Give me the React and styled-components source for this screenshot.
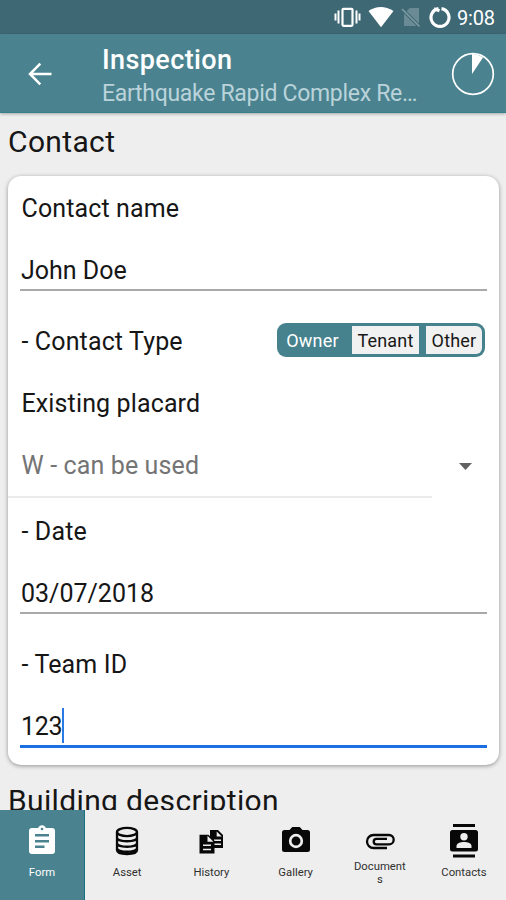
import React from "react";
import styled, { createGlobalStyle } from "styled-components";

const GlobalStyle = createGlobalStyle`
  * { box-sizing: border-box; }
  body { margin: 0; background: #eeeeee; font-family: Roboto, "Liberation Sans", sans-serif; color: #161616; }
`;

const Screen = styled.div`
  width: 506px;
  height: 900px;
  overflow: hidden;
  display: flex;
  flex-direction: column;
  background: #eeeeee;
`;

const StatusBar = styled.div`
  flex: none;
  height: 34px;
  padding-right: 10px;
  display: flex;
  align-items: center;
  justify-content: flex-end;
  background: #3d6874;
  color: #fff;
`;

const StatusIcons = styled.svg`
  display: block;
  margin-right: 5px;
`;

const Clock = styled.span`
  font-size: 20px;
  line-height: 36px;
  width: 39px;
  padding-top: 2px;
  white-space: nowrap;
  letter-spacing: -0.15px;
`;

const AppBar = styled.header`
  flex: none;
  height: 79px;
  display: flex;
  align-items: center;
  padding: 1px 11px 0 28px;
  background: #4a838f;
  border-bottom: 1px solid #34808c;
  box-shadow: 0 1px 3px rgba(0, 0, 0, 0.3);
  z-index: 1;
`;

const BackIcon = styled.svg`
  flex: none;
  width: 24px;
  height: 24px;
  margin-right: 50px;
`;

const Titles = styled.div`
  flex: 1;
  padding-top: 6px;
`;

const Title = styled.h1`
  margin: 0;
  font-size: 27px;
  line-height: 34px;
  font-weight: 500;
  color: #fff;
  letter-spacing: 0.4px;
`;

const Subtitle = styled.div`
  font-size: 23px;
  line-height: 33px;
  color: #bad3db;
  white-space: nowrap;
  letter-spacing: -0.3px;
`;

const Progress = styled.svg`
  flex: none;
  width: 44px;
  height: 44px;
`;

const Content = styled.main`
  height: 697px;
  flex: none;
  overflow: hidden;
  padding: 0 7px 0 8px;
`;

const SectionTitle = styled.h2`
  margin: 0;
  font-size: 30px;
  font-weight: 400;
  line-height: 34px;
  letter-spacing: 0.35px;
  padding-top: ${(p) => p.$top};
  white-space: nowrap;
`;

const Card = styled.section`
  height: 589px;
  margin-top: 17px;
  padding-top: 18px;
  background: #fff;
  border-radius: 13px;
  box-shadow: 0 1px 4px rgba(0, 0, 0, 0.38);
`;

const Label = styled.div`
  margin-left: 13.5px;
  font-size: 25px;
  line-height: 30px;
  white-space: nowrap;
  letter-spacing: 0.13px;
`;

const Input = styled.div`
  height: ${(p) => (p.$active ? "36px" : "35px")};
  margin: 32px 12px ${(p) => p.$gap || "0"};
  padding-left: 1px;
  display: flex;
  align-items: flex-start;
  font-size: 25px;
  line-height: 30px;
  letter-spacing: ${(p) => (p.$active ? "-0.35px" : "0")};
  border-bottom: ${(p) => (p.$active ? "3px solid #1b6fe0" : "2px solid #a9a9a9")};
`;

const Caret = styled.span`
  width: 2px;
  height: 35px;
  margin-top: -4px;
  background: #2a7ae6;
`;

const ChoiceRow = styled.div`
  height: 34px;
  display: flex;
  align-items: center;
  justify-content: space-between;
  padding-right: 14px;
  margin-bottom: 30px;
`;

const Segmented = styled.div`
  width: 208px;
  height: 34px;
  margin-bottom: 4px;
  padding: 3px;
  display: flex;
  gap: 7px;
  background: #45828d;
  border-radius: 9px;
`;

const Segment = styled.button`
  border: 0;
  padding: 2px 0 0;
  font: 400 18px/24px Roboto, sans-serif;
  letter-spacing: 0.2px;
  width: ${(p) => p.$width};
  border-radius: ${(p) => (p.$last ? "0 6px 6px 0" : "0")};
  background: ${(p) => (p.$selected ? "transparent" : "#f1f1f1")};
  color: ${(p) => (p.$selected ? "#fff" : "#181818")};
`;

const Select = styled.div`
  height: 61px;
  margin-top: 16px;
  padding: 16px 27px 0 0;
  display: flex;
  justify-content: space-between;
  align-items: flex-start;
  color: #747474;
`;

const DownArrow = styled.svg`
  width: 13px;
  height: 7px;
  margin-top: 12px;
`;

const Divider = styled.div`
  width: 424px;
  height: 2px;
  background: #ebebeb;
  margin-bottom: 19px;
`;

const TabBar = styled.nav`
  flex: none;
  height: 90px;
  display: grid;
  grid-template-columns: 85px repeat(4, 84.25px) 84px;
  background: #eeeeee;
`;

const Tab = styled.div`
  display: flex;
  flex-direction: column;
  align-items: center;
  padding-top: 13px;
  background: ${(p) => (p.$active ? "#4a838f" : "transparent")};
  border-right: ${(p) => (p.$active ? "1px solid #17727f" : "0")};
  color: ${(p) => (p.$active ? "#fff" : "#303030")};
`;

const TabIcon = styled.svg`
  flex: none;
  display: block;
  width: 36px;
  height: 36px;
`;

const TabText = styled.span`
  width: 54px;
  margin-top: ${(p) => (p.$wrapped ? "1px" : "7px")};
  font-size: 11.3px;
  line-height: 13px;
  letter-spacing: 0;
  text-align: center;
  word-break: break-all;
`;

const FormDrawing = () => (
  <>
    <path fill="#fff" d="M8 5h6.2a4 4 0 0 1 7.6 0H28a3 3 0 0 1 3 3v20a3 3 0 0 1-3 3H8a3 3 0 0 1-3-3V8a3 3 0 0 1 3-3Z" />
    <circle cx="18" cy="6" r="1.3" fill="#4a838f" />
    <path stroke="#4a838f" strokeWidth="2.5" d="M11 12.2h14M11 18.2h14M11 23.8h9.5" />
  </>
);

const AssetDrawing = () => (
  <g fill="none" stroke="#080808" strokeWidth="2.3">
    <ellipse cx="18" cy="9" rx="10" ry="4.1" />
    <path d="M8 9v18c0 5.4 20 5.4 20 0V9M8 14.5c0 5 20 5 20 0M8 20c0 5 20 5 20 0M8 25c0 5 20 5 20 0" />
  </g>
);

const HistoryDrawing = () => (
  <>
    <path fill="#080808" d="M17 7h8l5 5v13H17Z" />
    <path fill="#eeeeee" d="M23.7 8.4v5.2h5.1Z" />
    <path stroke="#eeeeee" strokeWidth="1.4" d="M21 17.2h7M21 21.2h7" />
    <path fill="#080808" d="M6.5 11.800h9l6 6v12.700h-15Z" />
    <path fill="#eeeeee" d="M14.500 12.800v6h6Z" />
    <path stroke="#eeeeee" strokeWidth="1.5" d="M10 22.200h8M10 26.500h8" />
  </>
);

const GalleryDrawing = () => (
  <>
    <path fill="#080808" d="M6.5 7h5l2.8-3h7.4l2.8 3h5q2.5 0 2.5 2.5v17q0 2.5-2.5 2.5h-23Q4 29 4 26.500V9.500Q4 7 6.500 7Z" />
    <circle cx="18" cy="18" r="5.8" fill="none" stroke="#eee" strokeWidth="2.7" />
  </>
);

const DocumentsDrawing = () => (
  <path
    fill="none"
    stroke="#080808"
    strokeWidth="2.3"
    d="M25 25H11.500a6.500 6.500 0 0 1 0-13H27a4.700 4.700 0 0 1 0 9.400H14.500a2.800 2.800 0 0 1 0-5.600H25"
  />
);

const ContactsDrawing = () => (
  <>
    <path fill="#080808" d="M7 1h22v3H7ZM7 31.500h22v3H7ZM6.500 7h23q2.500 0 2.500 2.500v16.500q0 2.500-2.500 2.500h-23Q4 28.500 4 26V9.500Q4 7 6.500 7Z" />
    <circle cx="18" cy="13.700" r="3.700" fill="#eee" />
    <path fill="#eee" d="M10.500 25v-2c0-5.300 15-5.300 15 0v2Z" />
  </>
);

const tabs = [
  { label: "Form", Drawing: FormDrawing, active: true },
  { label: "Asset", Drawing: AssetDrawing },
  { label: "History", Drawing: HistoryDrawing },
  { label: "Gallery", Drawing: GalleryDrawing },
  { label: "Documents", Drawing: DocumentsDrawing, wrapped: true },
  { label: "Contacts", Drawing: ContactsDrawing },
];

export default function App() {
  return (
    <>
      <GlobalStyle />
      <Screen>
        <StatusBar>
          <StatusIcons width="118" height="34" viewBox="334 0 118 34">
            <rect x="342.500" y="8.800" width="10" height="17" rx="1" fill="none" stroke="#fff" strokeWidth="2.200" />
            <path stroke="#fff" strokeWidth="2" d="M338.500 10.500v13M335.500 13.500v7M356.500 10.500v13M359.500 13.500v7" />
            <path fill="#fff" d="M368.500 11q12-8 25 0L381 27.200Z" />
            <path fill="#6a8b95" d="M410 8h9v15.500L406.500 11ZM404 13.500V26h12.500Z" />
            <path stroke="#7d9aa3" strokeWidth="1.700" d="m402 9 17.500 17.500" />
            <path fill="none" stroke="#fff" strokeWidth="3.200" d="M441.500 8.600a9 9 0 1 1-3 0M434 8.700l5.500 2" />
          </StatusIcons>
          <Clock>9:08</Clock>
        </StatusBar>
        <AppBar>
          <BackIcon viewBox="0 0 24 24">
            <path fill="none" stroke="#fff" strokeWidth="2.500" d="M23.500 12H2.500M12.300 1.700 2 12l10.300 10.300" />
          </BackIcon>
          <Titles>
            <Title>Inspection</Title>
            <Subtitle>Earthquake Rapid Complex Re…</Subtitle>
          </Titles>
          <Progress viewBox="0 0 44 44">
            <circle cx="22" cy="22" r="20.300" fill="none" stroke="#fff" strokeWidth="1.700" />
            <path fill="#fff" d="M21 22V2q6 0 11 3.500Z" />
          </Progress>
        </AppBar>
        <Content>
          <SectionTitle $top="12px">Contact</SectionTitle>
          <Card>
            <Label>Contact name</Label>
            <Input $gap="34px">John Doe</Input>
            <ChoiceRow>
              <Label>- Contact Type</Label>
              <Segmented>
                <Segment $selected $width="65px">Owner</Segment>
                <Segment $width="67px">Tenant</Segment>
                <Segment $width="56px" $last>Other</Segment>
              </Segmented>
            </ChoiceRow>
            <Label>Existing placard</Label>
            <Select>
              <Label>W - can be used</Label>
              <DownArrow viewBox="0 0 13 7"><path fill="#626262" d="M0 0h13L6.500 7Z" /></DownArrow>
            </Select>
            <Divider />
            <Label>- Date</Label>
            <Input $gap="36px">03/07/2018</Input>
            <Label>- Team ID</Label>
            <Input $active>123<Caret /></Input>
          </Card>
          <SectionTitle $top="19px">Building description</SectionTitle>
        </Content>
        <TabBar>
          {tabs.map(({ label, Drawing, active, wrapped }) => (
            <Tab key={label} $active={active}>
              <TabIcon viewBox="0 0 36 36"><Drawing /></TabIcon>
              <TabText $wrapped={wrapped}>{label}</TabText>
            </Tab>
          ))}
        </TabBar>
      </Screen>
    </>
  );
}
